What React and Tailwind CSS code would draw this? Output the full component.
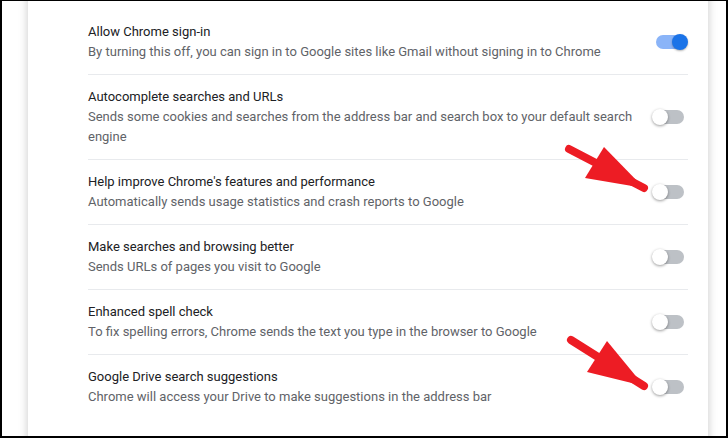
import React from "react";

const rows = [
  {
    title: "Allow Chrome sign-in",
    desc: "By turning this off, you can sign in to Google sites like Gmail without signing in to Chrome",
    on: true,
  },
  {
    title: "Autocomplete searches and URLs",
    desc: "Sends some cookies and searches from the address bar and search box to your default search engine",
    on: false,
  },
  {
    title: "Help improve Chrome's features and performance",
    desc: "Automatically sends usage statistics and crash reports to Google",
    on: false,
  },
  {
    title: "Make searches and browsing better",
    desc: "Sends URLs of pages you visit to Google",
    on: false,
  },
  {
    title: "Enhanced spell check",
    desc: "To fix spelling errors, Chrome sends the text you type in the browser to Google",
    on: false,
  },
  {
    title: "Google Drive search suggestions",
    desc: "Chrome will access your Drive to make suggestions in the address bar",
    on: false,
  },
];

const Toggle = ({ on }) => (
  <div className="relative w-[36px] h-[16px] shrink-0">
    <div
      className={`absolute left-[4px] right-[4px] top-[1px] h-[14px] rounded-full ${
        on ? "bg-[#8ab4f8]" : "bg-[#bdc1c6]"
      }`}
    />
    <div
      className={`absolute top-0 w-[16px] h-[16px] rounded-full ${
        on
          ? "right-0 bg-[#1a73e8] shadow-[0_1px_2px_rgba(0,0,0,0.3)]"
          : "left-0 bg-white shadow-[0_1px_3px_rgba(0,0,0,0.4)]"
      }`}
    />
  </div>
);

const Arrow = ({ x1, y1, x2, y2, h1, h2 }) => (
  <g>
    <line x1={x1} y1={y1} x2={x2} y2={y2} stroke="#ed1c24" strokeWidth="8" strokeLinecap="round" />
    <polygon points={`${h1[0]},${h1[1]} ${x2},${y2} ${h2[0]},${h2[1]}`} fill="#ed1c24" />
  </g>
);

export default function App() {
  return (
    <div
      className="relative w-[728px] h-[438px] overflow-hidden bg-white border-black border-t border-l-2 border-r-2 border-b-2"
      style={{ fontFamily: "Roboto, 'Liberation Sans', sans-serif" }}
    >
      <div className="ml-[26px] w-[680px] h-[460px] -mt-[10px] bg-white shadow-[0_0_9px_rgba(0,0,0,0.22)] pl-[60px] pr-[20px] pt-[19px]">
        {rows.map((r, i) => (
          <div
            key={i}
            className={`flex items-center min-h-[64px] py-3 ${i > 0 ? "border-t border-[#e8eaed]" : ""}`}
          >
            <div className="flex-1 pr-[10px] text-[13px] leading-[20px]">
              <div className="text-[#202124]">{r.title}</div>
              <div className="text-[#5f6368]">{r.desc}</div>
            </div>
            <Toggle on={r.on} />
          </div>
        ))}
      </div>

      <svg className="absolute left-0 top-0 pointer-events-none" width="728" height="438">
        <Arrow x1={567} y1={148} x2={642} y2={187} h1={[602, 146]} h2={[583, 177]} />
        <Arrow x1={569} y1={339} x2={642} y2={385} h1={[605, 340]} h2={[585, 371]} />
      </svg>
    </div>
  );
}
